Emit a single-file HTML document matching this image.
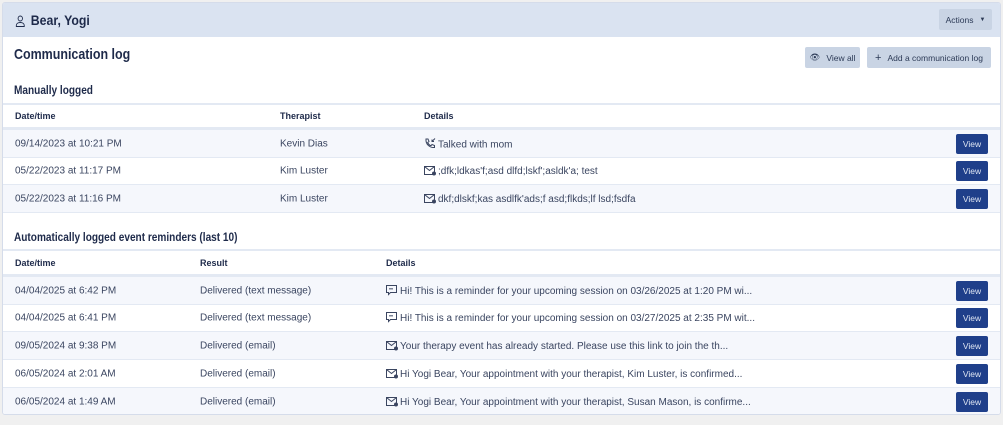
<!DOCTYPE html>
<html><head><meta charset="utf-8"><style>
*{box-sizing:border-box;margin:0;padding:0}
body{width:1003px;height:425px;background:#f0f0f0;font-family:"Liberation Sans",sans-serif;color:#3a4560;position:relative;overflow:hidden}
.card{position:absolute;left:2px;top:2px;width:999px;height:413px;background:#fff;border:1px solid #d5dcea;border-radius:3px;overflow:hidden}
.hdr{position:absolute;left:0;top:0;width:100%;height:34px;background:#dae3f1}
.abs{position:absolute;white-space:nowrap;transform-origin:left center}
.h1{font-weight:bold;font-size:15px;color:#1e2a4a;transform:scaleX(0.83)}
.h2{font-weight:bold;font-size:12px;color:#1e2a4a;transform:scaleX(0.84)}
.btn{position:absolute;background:#c9d4e4;color:#2c3a56;font-size:8.5px;border-radius:2px;display:flex;align-items:center;justify-content:center;gap:6px}
.row{position:absolute;left:0;width:100%;font-size:10px}
.row span{position:absolute;top:50%;transform:translateY(-50%);white-space:nowrap}
.th{font-weight:bold;color:#1e2a4a;background:#fff;border-top:2px solid #e3e9f3;border-bottom:3px solid #e3e9f3;font-size:9px}
.st{background:#f5f7fc}
.bd{border-bottom:1px solid #e3e9f3}
.v{position:absolute;left:953px;width:32px;height:20px;background:#1f3f8a;color:#dfe6f3;font-size:8.5px;border-radius:2px;display:flex;align-items:center;justify-content:center;top:50%;transform:translateY(-50%)}
svg{vertical-align:-2px;margin-right:2px}
</style></head><body>
<div class="card">
<div class="hdr"></div>
<div class="abs" style="left:12px;top:9px;font-size:14px;font-weight:bold;color:#1e2a4a;transform:scaleX(0.88)"><svg width="12" height="12" viewBox="0 0 12 12" fill="none" stroke="#1e2a4a" stroke-width="1"><circle cx="6" cy="3.5" r="2.5"/><path d="M1.5 11.5v-1c0-2 2-3 4.5-3s4.5 1 4.5 3v1z"/></svg> Bear, Yogi</div>
<div class="btn" style="left:936px;top:6px;width:53px;height:21px">Actions <span style="font-size:6px">▼</span></div>
<div class="abs h1" style="left:11px;top:43px">Communication log</div>
<div class="btn" style="left:802px;top:44px;width:55px;height:21px"><span>👁︎</span>View all</div>
<div class="btn" style="left:864px;top:44px;width:124px;height:21px"><span style="font-size:11px">+</span>Add a communication log</div>
<div class="abs h2" style="left:11px;top:80px">Manually logged</div>
<div class="row th" style="top:100px;height:27px"><span style="left:12px">Date/time</span><span style="left:277px">Therapist</span><span style="left:421px">Details</span></div>
<div class="row st bd" style="top:127px;height:28px"><span style="left:12px">09/14/2023 at 10:21 PM</span><span style="left:277px">Kevin Dias</span><span style="left:421px"><svg width="12" height="12" viewBox="0 0 12 12" fill="none" stroke="#3a4560" stroke-width="1"><path d="M2 1.5l2 0 1 2.5-1.3 1a6 6 0 0 0 3.3 3.3l1-1.3 2.5 1v2c-5 .5-9-3.5-8.5-8.5z"/><path d="M11 1L8 4M8 2v2h2"/></svg>Talked with mom</span><div class="v">View</div></div>
<div class="row bd" style="top:155px;height:27px"><span style="left:12px">05/22/2023 at 11:17 PM</span><span style="left:277px">Kim Luster</span><span style="left:421px"><svg width="12" height="11" viewBox="0 0 12 11" fill="none" stroke="#3a4560" stroke-width="1"><rect x=".5" y="1.5" width="10" height="8"/><path d="M.5 1.5l5 4 5-4"/><circle cx="10" cy="8.5" r="1.5" fill="#3a4560"/></svg>;dfk;ldkas'f;asd dlfd;lskf';asldk'a; test</span><div class="v">View</div></div>
<div class="row st bd" style="top:182px;height:28px"><span style="left:12px">05/22/2023 at 11:16 PM</span><span style="left:277px">Kim Luster</span><span style="left:421px"><svg width="12" height="11" viewBox="0 0 12 11" fill="none" stroke="#3a4560" stroke-width="1"><rect x=".5" y="1.5" width="10" height="8"/><path d="M.5 1.5l5 4 5-4"/><circle cx="10" cy="8.5" r="1.5" fill="#3a4560"/></svg>dkf;dlskf;kas asdlfk'ads;f asd;flkds;lf lsd;fsdfa</span><div class="v">View</div></div>
<div class="abs h2" style="left:11px;top:227px">Automatically logged event reminders (last 10)</div>
<div class="row th" style="top:246px;height:28px"><span style="left:12px">Date/time</span><span style="left:197px">Result</span><span style="left:383px">Details</span></div>
<div class="row st bd" style="top:274px;height:28px"><span style="left:12px">04/04/2025 at 6:42 PM</span><span style="left:197px">Delivered (text message)</span><span style="left:383px"><svg width="12" height="11" viewBox="0 0 12 11" fill="none" stroke="#3a4560" stroke-width="1"><path d="M.5.5h10v7h-6l-2 2v-2h-2z"/><path d="M4 3v1.5M6 3v1.5" stroke-width="1.3"/></svg>Hi! This is a reminder for your upcoming session on 03/26/2025 at 1:20 PM wi...</span><div class="v">View</div></div>
<div class="row bd" style="top:302px;height:27px"><span style="left:12px">04/04/2025 at 6:41 PM</span><span style="left:197px">Delivered (text message)</span><span style="left:383px"><svg width="12" height="11" viewBox="0 0 12 11" fill="none" stroke="#3a4560" stroke-width="1"><path d="M.5.5h10v7h-6l-2 2v-2h-2z"/><path d="M4 3v1.5M6 3v1.5" stroke-width="1.3"/></svg>Hi! This is a reminder for your upcoming session on 03/27/2025 at 2:35 PM wit...</span><div class="v">View</div></div>
<div class="row st bd" style="top:329px;height:28px"><span style="left:12px">09/05/2024 at 9:38 PM</span><span style="left:197px">Delivered (email)</span><span style="left:383px"><svg width="12" height="11" viewBox="0 0 12 11" fill="none" stroke="#3a4560" stroke-width="1"><rect x=".5" y="1.5" width="10" height="8"/><path d="M.5 1.5l5 4 5-4"/><circle cx="10" cy="8.5" r="1.5" fill="#3a4560"/></svg>Your therapy event has already started. Please use this link to join the th...</span><div class="v">View</div></div>
<div class="row bd" style="top:357px;height:28px"><span style="left:12px">06/05/2024 at 2:01 AM</span><span style="left:197px">Delivered (email)</span><span style="left:383px"><svg width="12" height="11" viewBox="0 0 12 11" fill="none" stroke="#3a4560" stroke-width="1"><rect x=".5" y="1.5" width="10" height="8"/><path d="M.5 1.5l5 4 5-4"/><circle cx="10" cy="8.5" r="1.5" fill="#3a4560"/></svg>Hi Yogi Bear, Your appointment with your therapist, Kim Luster, is confirmed...</span><div class="v">View</div></div>
<div class="row st" style="top:385px;height:28px"><span style="left:12px">06/05/2024 at 1:49 AM</span><span style="left:197px">Delivered (email)</span><span style="left:383px"><svg width="12" height="11" viewBox="0 0 12 11" fill="none" stroke="#3a4560" stroke-width="1"><rect x=".5" y="1.5" width="10" height="8"/><path d="M.5 1.5l5 4 5-4"/><circle cx="10" cy="8.5" r="1.5" fill="#3a4560"/></svg>Hi Yogi Bear, Your appointment with your therapist, Susan Mason, is confirme...</span><div class="v">View</div></div>
</div>
</body></html>
